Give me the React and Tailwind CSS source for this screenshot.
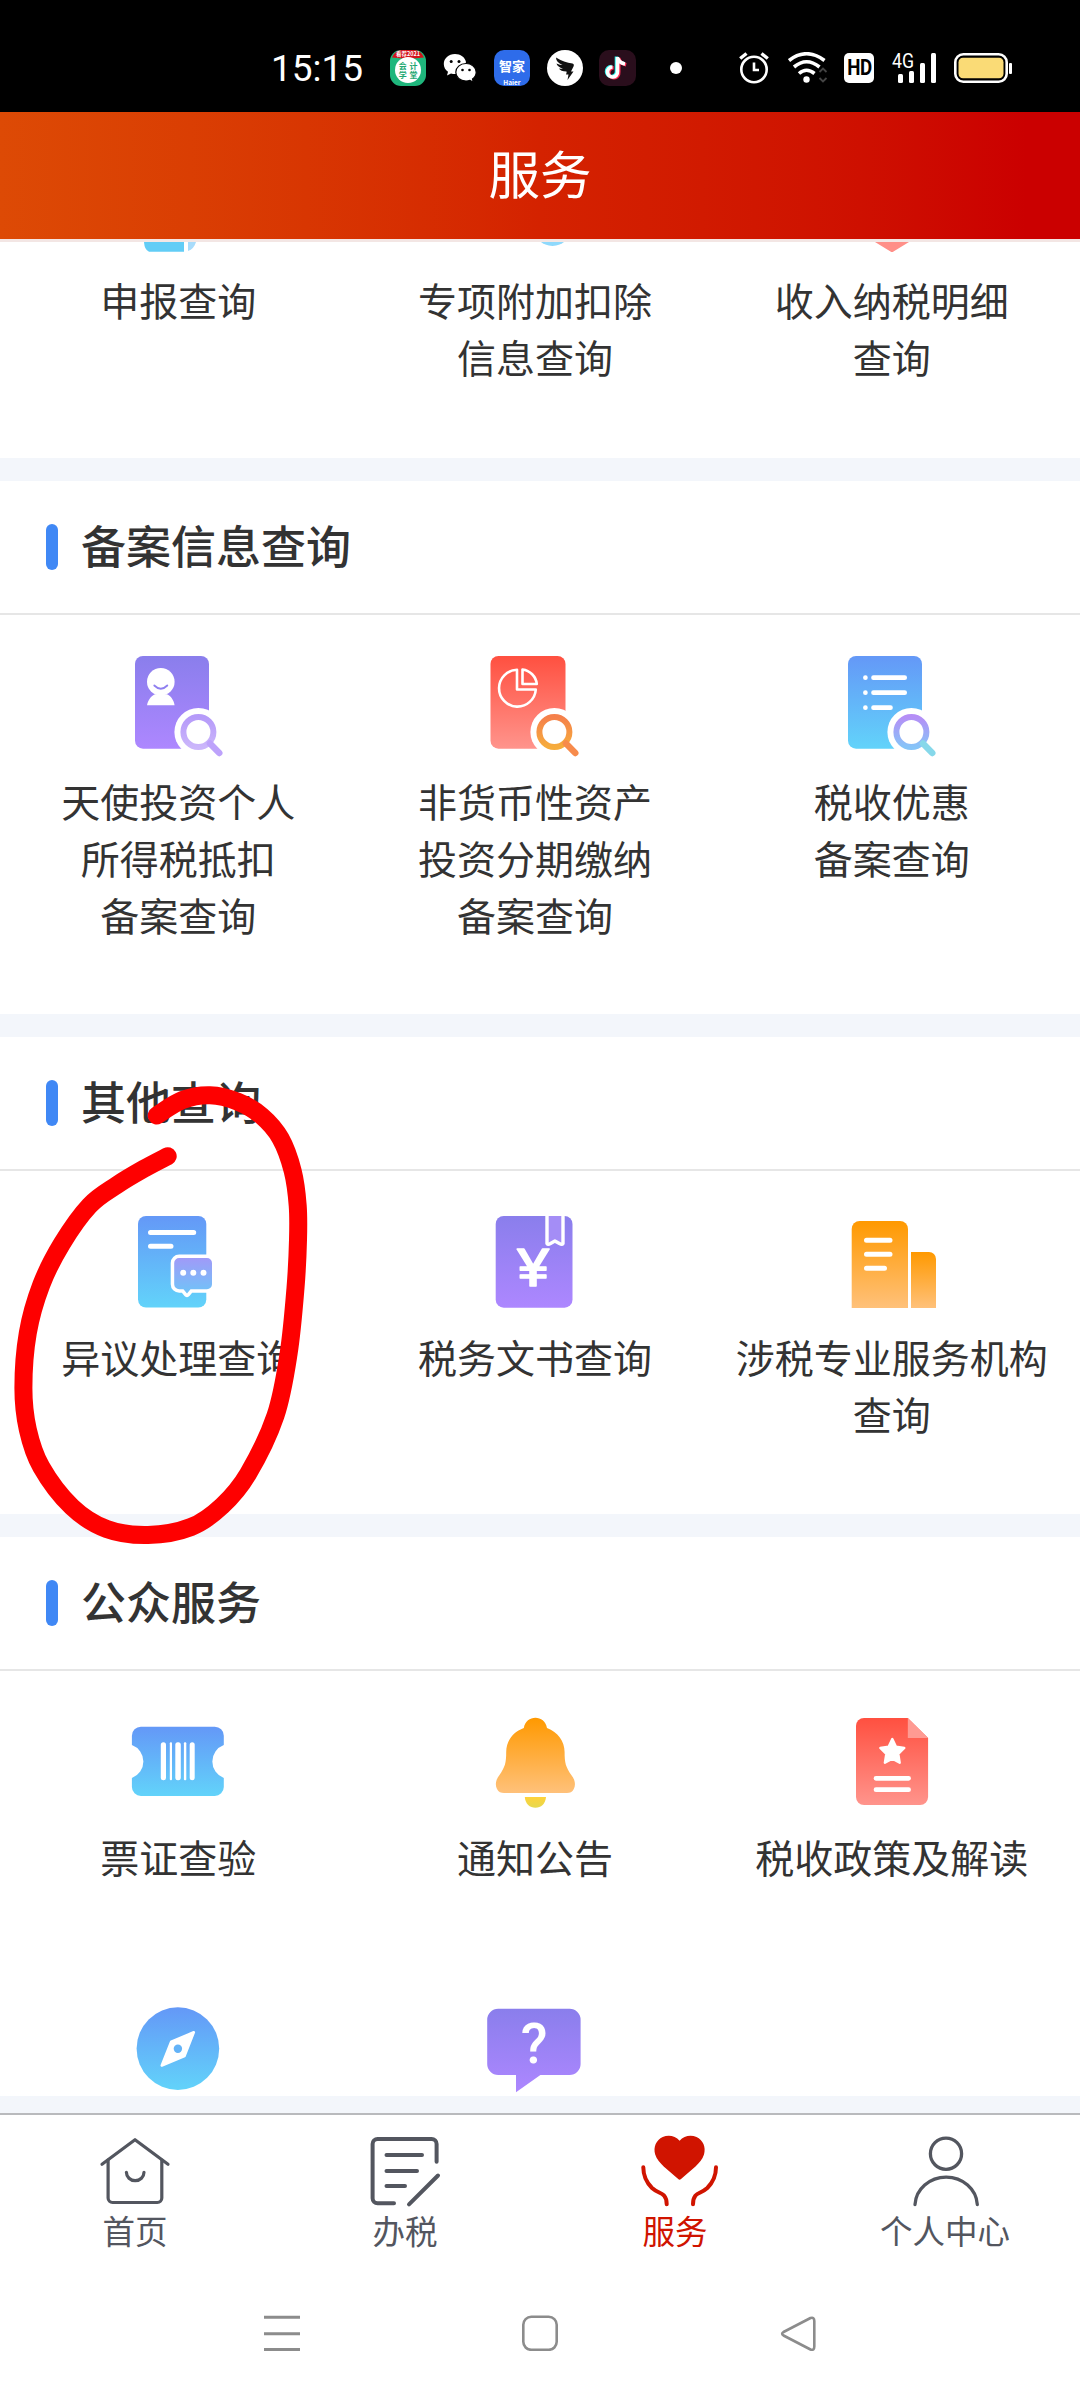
const gradients = [
  ['blue', '#6498f7', '#62d3fa'],
  ['purple', '#8a7eec', '#ad87ff'],
  ['red', '#ff5040', '#ff948c'],
  ['orange', '#ff9900', '#ffc17a'],
  ['lensPurple', '#b59af9', '#cbb6fb'],
  ['lensOrange', '#f5804b', '#f6ac3c'],
  ['lensBlue', '#b58ef6', '#86c4f8'],
  ['bubble', '#a09af8', '#6fc4f8'],
  ['clapper', '#ffd23a', '#e6d84e'],
]

function Gradients() {
  return (
    <svg className="absolute w-0 h-0">
      <defs>
        {gradients.map(([id, from, to]) => (
          <linearGradient key={id} id={id} x1="0" y1="0" x2="0" y2="1">
            <stop offset="0" stopColor={from} />
            <stop offset="1" stopColor={to} />
          </linearGradient>
        ))}
      </defs>
    </svg>
  )
}

function Icon({ children }) {
  return (
    <svg className="w-[101px] h-[110px]" viewBox="0 0 101 110" fill="none" strokeLinecap="round" strokeLinejoin="round">
      {children}
    </svg>
  )
}

function Lens({ fill, handle }) {
  return (
    <>
      <circle cx="70.4" cy="77" r="24" fill="#fff" />
      <circle cx="70.4" cy="77" r="15" stroke={`url(#${fill})`} strokeWidth="6" />
      <path d="M82 88.5L91.3 98" stroke={handle} strokeWidth="6.4" />
    </>
  )
}

const AngelIcon = () => (
  <Icon>
    <rect x="7" y="1" width="74" height="92.7" rx="8" fill="url(#purple)" />
    <circle cx="32.8" cy="26.7" r="13.8" fill="#fff" />
    <path d="M26.3 30.5Q32.8 37 39.3 30.5" stroke="#8f7ff0" strokeWidth="1.8" />
    <path d="M19 50.3C20 45 23 41 27 39.3H39C43 41 45.6 45 46.6 50.3Z" fill="#fff" />
    <Lens fill="lensPurple" handle="#bda2fb" />
  </Icon>
)

const AssetIcon = () => (
  <Icon>
    <rect x="6.5" y="1" width="75" height="92.7" rx="8" fill="url(#red)" />
    <path d="M33 14.8V34.5H51.8A18.4 18.4 0 1 1 33 14.8Z" stroke="#fff" strokeWidth="2.6" />
    <path d="M38.5 14.5V29H52.8A16.5 16.5 0 0 0 38.5 14.5Z" stroke="#fff" strokeWidth="2.6" />
    <Lens fill="lensOrange" handle="#f78b4c" />
  </Icon>
)

const BenefitIcon = () => (
  <Icon>
    <rect x="7" y="1" width="74" height="92.7" rx="8" fill="url(#blue)" />
    <g stroke="#fff" strokeWidth="4.7">
      <path d="M24.4 22.7h.01M24.4 37.7h.01M24.4 52.7h.01" />
      <path d="M32.5 22.7H63.7M32.5 37.7H63.7M32.5 52.7H49.5" />
    </g>
    <Lens fill="lensBlue" handle="#86d8ea" />
  </Icon>
)

const BUBBLE = 'M51.2 47H79a5 5 0 0 1 5 5V73.3a5 5 0 0 1-5 5H62.5L59 82.5L55.5 78.3H51.2a5 5 0 0 1-5-5V52a5 5 0 0 1 5-5Z'

const ObjectionIcon = () => (
  <Icon>
    <rect x="10" y="5" width="68.3" height="91.5" rx="8" fill="url(#blue)" />
    <path d="M22.5 21.5H65.7M22.5 35.3H43" stroke="#fff" strokeWidth="5" />
    <path d={BUBBLE} stroke="#fff" strokeWidth="7" />
    <path d={BUBBLE} fill="url(#bubble)" />
    <g fill="#fff">
      <circle cx="55.2" cy="61.8" r="3" />
      <circle cx="65.3" cy="61.8" r="3" />
      <circle cx="75.5" cy="61.8" r="3" />
    </g>
  </Icon>
)

const DocumentIcon = () => (
  <Icon>
    <rect x="11.7" y="5" width="76.8" height="91.7" rx="8" fill="url(#purple)" />
    <path d="M63 3V32.5Q64 34 66.5 32.5L70.9 30L75.4 32.5Q78 34 79 32.5V3" fill="#a48df6" stroke="#fff" strokeWidth="3.4" />
    <path d="M60 0H82V5H60Z" fill="#fff" />
    <g transform="translate(49.2 75) scale(1.2 1)">
      <text textAnchor="middle" fontSize="52" fontFamily="Roboto" fill="#fff" stroke="#fff" strokeWidth="1.4">¥</text>
    </g>
  </Icon>
)

const AgencyIcon = () => (
  <Icon>
    <path d="M10.7 97V18a8 8 0 0 1 8-8H59a8 8 0 0 1 8 8V97Z" fill="url(#orange)" />
    <path d="M70 97V41H88a7 7 0 0 1 7 7V97Z" fill="url(#orange)" />
    <path d="M25.5 29.3H49M25.5 43.3H49M25.5 57.3H43.5" stroke="#fff" strokeWidth="5" />
  </Icon>
)

const TicketIcon = () => (
  <Icon>
    <path d="M12.9 15.7H86.8a9 9 0 0 1 9 9V34A17.6 17.6 0 0 0 95.8 67V76a9 9 0 0 1-9 9H12.9a9 9 0 0 1-9-9V67A17.6 17.6 0 0 0 3.9 34V24.7a9 9 0 0 1 9-9Z" fill="url(#blue)" />
    <g fill="#fff">
      <rect x="32.8" y="31.3" width="5.2" height="38" rx="2.5" />
      <rect x="41.8" y="31.3" width="2.2" height="38" rx="1" />
      <rect x="47.3" y="31.3" width="5.5" height="38" rx="2.5" />
      <rect x="55.9" y="31.3" width="2.4" height="38" rx="1" />
      <rect x="61.7" y="31.3" width="5" height="38" rx="2.5" />
    </g>
  </Icon>
)

const BellIcon = () => (
  <Icon>
    <path d="M51.4 6.7C46 6.7 41 10 39.8 17C29 21 22.2 30 22.2 41C22.2 52 21 56 15.5 64C11.5 69 11 74 13 78C14.5 81 17 82 20 82H83C86 82 88.3 81 89.8 78C91.8 74 91.3 69 87.3 64C81.8 56 80.6 52 80.6 41C80.6 30 73.8 21 63 17C61.8 10 56.8 6.7 51.4 6.7Z" fill="url(#orange)" />
    <path d="M40.8 86H62C61.5 93 57 96.7 51.4 96.7C45.8 96.7 41.3 93 40.8 86Z" fill="url(#clapper)" />
  </Icon>
)

const PolicyIcon = () => (
  <Icon>
    <path d="M23 7H66.8L87.1 27V86a8 8 0 0 1-8 8H23a8 8 0 0 1-8-8V15a8 8 0 0 1 8-8Z" fill="url(#red)" />
    <path d="M66.8 7L87.1 27H66.8Z" fill="#ff9a92" />
    <path d="M51.3 28L55 35.7L63.3 37L57.3 43L58.7 51.7L51.3 47.7L43.9 51.7L45.3 43L39.3 37L47.6 35.7Z" fill="#fff" stroke="#fff" strokeWidth="2.4" />
    <path d="M35 67.3H67.6M35 78.7H67.6" stroke="#fff" strokeWidth="4.7" />
  </Icon>
)

const CompassIcon = () => (
  <Icon>
    <circle cx="49.9" cy="50.6" r="41.3" fill="url(#blue)" />
    <path d="M65.8 34.3L56.5 58L33.8 67.5L43.3 43.6Z" fill="#fff" stroke="#fff" strokeWidth="2.6" />
    <circle cx="49.9" cy="50.7" r="4.2" fill="#63b3f8" />
  </Icon>
)

const QuestionIcon = () => (
  <Icon>
    <path d="M14.2 10.7H85.6a11 11 0 0 1 11 11V66a11 11 0 0 1-11 11H56.4L32 94.3V77H14.2a11 11 0 0 1-11-11V21.7a11 11 0 0 1 11-11Z" fill="url(#purple)" />
    <text x="50" y="65" textAnchor="middle" fontSize="55" fontFamily="Roboto" fontWeight="500" fill="#fff">?</text>
  </Icon>
)

function Label({ lines }) {
  return (
    <p className="mt-[7px] mb-[2px] text-[39px] leading-[57px] text-[#333] text-center whitespace-nowrap">
      {lines.map((line) => (
        <span key={line} className="block">{line}</span>
      ))}
    </p>
  )
}

function Item({ icon: ItemIcon, lines }) {
  return (
    <div className="flex flex-col items-center">
      <ItemIcon />
      <Label lines={lines} />
    </div>
  )
}

function Section({ title, className, children }) {
  return (
    <section className={`bg-white shrink-0 ${className}`}>
      <div className="h-[134px] flex items-center pl-[46px] border-b-2 border-[#e6e6e6]">
        <span className="w-3 h-[46px] rounded-full bg-[#4088f5]" />
        <h2 className="ml-[23px] pb-[5px] text-[45px] leading-none font-medium text-[#333]">{title}</h2>
      </div>
      <div className="grid grid-cols-3 w-[1070px] pt-10 gap-y-[111px]">{children}</div>
    </section>
  )
}

function StatusBar() {
  return (
    <div className="h-[112px] shrink-0 bg-black text-white flex items-center pl-[271px] pt-6">
      <span className="w-[119px] text-[37px] leading-none font-normal font-[Roboto] whitespace-nowrap">15:15</span>
      <svg className="w-9 h-9 shrink-0 overflow-visible" viewBox="0 0 36 36">
        <rect width="36" height="36" rx="11" fill="#1fb67c" />
        <path d="M2 7.5Q5 0 12 0H24Q31 0 34 7.5Q18 9.5 2 7.5Z" fill="#d3131c" />
        <circle cx="18" cy="20" r="13" fill="#fff" />
        <text x="18" y="6" textAnchor="middle" fontSize="5.5" fontWeight="700" fill="#fff">看荐2021</text>
        <g fontSize="8" fontWeight="700" fill="#1fa873" textAnchor="middle">
          <text x="12.8" y="18.5">会</text>
          <text x="23.5" y="18.5">计</text>
          <text x="12.8" y="28">学</text>
          <text x="23.5" y="28">堂</text>
        </g>
      </svg>
      <svg className="ml-[17px] w-[35px] h-[30px] shrink-0" viewBox="0 0 35 30">
        <path d="M12 1C5.5 1 .8 5.5 .8 11C.8 14.2 2.4 17 5 18.8L4 22.5L8 20.4Q10 21 12 21Q18 21 21 16L23 9C22 4 17.5 1 12 1Z" fill="#fff" />
        <path d="M23 10.5C17 10.5 12.8 14.5 12.8 19.2C12.8 24 17 28 23 28Q25 28 27 27.4L30.3 29.3L29.5 26C31.8 24.3 33.2 22 33.2 19.2C33.2 14.5 28.8 10.5 23 10.5Z" fill="#fff" stroke="#000" strokeWidth="1.2" />
        <circle cx="8.2" cy="8.5" r="1.5" />
        <circle cx="16" cy="8.5" r="1.5" />
        <circle cx="19.5" cy="17" r="1.3" />
        <circle cx="26.5" cy="17" r="1.3" />
      </svg>
      <svg className="ml-4 w-9 h-9 shrink-0 overflow-visible" viewBox="0 0 36 36">
        <rect width="36" height="36" rx="10" fill="#2e6cea" />
        <text x="18" y="21" textAnchor="middle" fontSize="13" fontWeight="700" fill="#fff">智家</text>
        <text x="18" y="34.5" textAnchor="middle" fontSize="6.5" fontWeight="700" fill="#fff">Haier</text>
      </svg>
      <svg className="ml-[17px] w-9 h-9 shrink-0" viewBox="0 0 36 36">
        <circle cx="18" cy="18" r="18" fill="#fff" />
        <path d="M9 7.5Q17 12.5 25.5 13.5Q27.5 14 26.5 16.5L24 21.5H26.5L20.5 30L21.5 24.5H19Q20 22 19.5 21.5Q13.500 21.5 12 18.5Q15 19 16 18.8Q10.500 17 9.5 13.5Q13 15 15.5 15Q9 12 9 7.5Z" fill="#111" />
      </svg>
      <svg className="ml-4 w-[37px] h-9 shrink-0" viewBox="0 0 37 36">
        <rect width="37" height="36" rx="10" fill="#2a0e1c" />
        <g fill="none" strokeWidth="3.6">
          <path d="M18.5 7V21.5A5 5 0 1 1 13.5 17M18.5 7.5Q20 13 26 14" stroke="#25f4ee" transform="translate(-1 -0.5)" />
          <path d="M18.5 7V21.5A5 5 0 1 1 13.5 17M18.5 7.5Q20 13 26 14" stroke="#fe2c55" transform="translate(1.2 0.8)" />
          <path d="M18.5 7V21.5A5 5 0 1 1 13.5 17M18.5 7.5Q20 13 26 14" stroke="#fff" />
        </g>
      </svg>
      <span className="ml-[34px] w-3 h-3 rounded-full bg-white" />
      <svg className="ml-[57px] w-[31px] h-8 shrink-0" viewBox="0 0 31 32" fill="none" stroke="#fff" strokeWidth="2.6">
        <circle cx="15" cy="17.5" r="12.7" />
        <path d="M15 10.5V18H20" />
        <path d="M1.2 6.5L7.5 1.5M22.5 1.5L28.8 6.5" strokeWidth="3.4" />
      </svg>
      <svg className="ml-[18px] w-10 h-8 shrink-0" viewBox="0 0 40 32" fill="none" stroke="#fff" strokeWidth="3.6">
        <path d="M1 8.5Q18.5 -5 36.5 8.5" />
        <path d="M6 15Q18.5 4.5 31.5 15" />
        <path d="M11 21.5Q18.5 15 26.5 21.5" />
        <circle cx="18.5" cy="27.5" r="3.2" fill="#fff" stroke="none" />
        <path d="M31.5 20L35 16.5L38.5 20M31.5 26L35 29.5L38.5 26" stroke="#444" strokeWidth="1.8" />
      </svg>
      <span className="ml-4 w-[30px] h-[30px] rounded-[5px] bg-white text-black flex items-center justify-center text-[22px] leading-none font-bold font-[Roboto]">
        <span className="inline-block scale-x-[0.85] tracking-tight">HD</span>
      </span>
      <svg className="ml-[18px] w-[46px] h-[30px] shrink-0 overflow-visible" viewBox="0 0 46 30" fill="#fff">
        <text x="0" y="14.5" fontSize="19.5" fontFamily="Roboto" textLength="22" lengthAdjust="spacingAndGlyphs">4G</text>
        <rect x="6" y="21" width="5" height="9" rx="1.5" />
        <rect x="17" y="18" width="5" height="12" rx="1.5" />
        <rect x="28" y="10" width="5" height="20" rx="1.5" />
        <rect x="39" y="0" width="5" height="30" rx="1.5" />
      </svg>
      <svg className="ml-4 w-[59px] h-[30px] shrink-0" viewBox="0 0 59 30">
        <rect x="1.3" y="1.3" width="51.4" height="27.4" rx="8" fill="none" stroke="#fff" strokeWidth="2.6" />
        <rect x="4.5" y="4.8" width="45" height="20.4" rx="4.5" fill="#fadb76" />
        <rect x="55" y="10" width="3" height="11" rx="1" fill="#fff" />
      </svg>
    </div>
  )
}

const PARTIAL_ICONS = [
  <g key="a">
    <path d="M16 0H56V9.7H21Q16.5 8 16 0Z" fill="#62cdf6" />
    <path d="M60 0H68Q66 7 60 9Z" fill="#a8dcfb" />
  </g>,
  <circle key="b" cx="68.5" cy="-14.5" r="18.5" fill="#8fd9fc" />,
  <path key="c" d="M34 0H68L52.5 9.5Q51 10.5 49.5 9.5Z" fill="#ff8f88" />,
]

const PARTIAL_LABELS = [['申报查询'], ['专项附加扣除', '信息查询'], ['收入纳税明细', '查询']]

const TABS = [
  {
    label: '首页',
    icon: (
      <g strokeWidth="3.2">
        <path d="M7 32.3L40 7.7L73 32.3" />
        <path d="M13.1 28V66a4.5 4.5 0 0 0 4.5 4.5H62.3a4.5 4.5 0 0 0 4.5-4.5V28" />
        <path d="M31.4 40.3A8.8 8.4 0 0 0 49 40.3" />
      </g>
    ),
  },
  {
    label: '办税',
    icon: (
      <g strokeWidth="4">
        <path d="M71.6 29.7V12a5 5 0 0 0-5-5H12.6a5 5 0 0 0-5 5V66.3a5 5 0 0 0 5 5H29" />
        <path d="M21.5 23H57M21.5 39H52M21.5 54H40M73 43.5L44 72.3" />
      </g>
    ),
  },
  {
    label: '服务',
    active: true,
    icon: (
      <g strokeWidth="4">
        <path d="M44.6 8.7C49 3.5 56 2.5 61.5 5C68 8 71.2 15 69 22.5C67.5 27.5 64 31 60.5 34.5L46 47Q44.6 48.3 43.2 47L28.7 34.5C25.2 31 21.7 27.5 20.2 22.5C18 15 21.2 8 27.7 5C33.2 2.5 40.2 3.5 44.6 8.7Z" fill="currentColor" stroke="none" />
        <path d="M8.3 35.3C8.3 44 11 50 17 56C22 60.5 26 60.5 29 63.5Q31.7 66.5 31.7 72.3" />
        <path d="M81 35.3C81 44 78.3 50 72.3 56C67.3 60.5 63.3 60.5 60.5 63.5Q58 66.5 58 72.3" />
      </g>
    ),
  },
  {
    label: '个人中心',
    icon: (
      <g strokeWidth="3.3">
        <circle cx="41" cy="21.7" r="15.6" />
        <path d="M10 72.5A31.2 29 0 0 1 72.3 72.5" />
      </g>
    ),
  },
]

const RING = [
  [156.7, 1115.4], [182.5, 1100], [210, 1095.2], [237.6, 1101.6], [261.7, 1116], [280.6, 1138.5],
  [292.7, 1171], [297.7, 1205.6], [298, 1240], [295.5, 1288], [288.6, 1353.7], [275.5, 1415.7],
  [248, 1474], [222, 1506], [191, 1527], [148, 1535], [106.7, 1529], [72, 1507],
  [41.3, 1467], [27.8, 1429.4], [23.4, 1388], [27.8, 1333], [41.3, 1284.8], [62, 1243.5],
  [89.5, 1205.6], [117, 1185], [144.6, 1168.4], [167.7, 1156.2],
]

// smooth curve through all the points (Catmull-Rom to bezier)
function smooth(points) {
  let d = `M${points[0].join(' ')}`
  for (let i = 0; i < points.length - 1; i++) {
    const a = points[i - 1] || points[i]
    const b = points[i]
    const c = points[i + 1]
    const e = points[i + 2] || c
    d += `C${b[0] + (c[0] - a[0]) / 6} ${b[1] + (c[1] - a[1]) / 6} ${c[0] - (e[0] - b[0]) / 6} ${c[1] - (e[1] - b[1]) / 6} ${c[0]} ${c[1]}`
  }
  return d
}

export default function App() {
  return (
    <div className="relative w-[1080px] h-[2400px] flex flex-col overflow-hidden bg-white font-['Noto_Sans_CJK_SC',sans-serif]">
      <Gradients />
      <StatusBar />
      <header className="h-[130px] shrink-0 flex items-center justify-center bg-linear-to-r from-[#dd4a05] via-[#d42200] to-[#cb0000] to-95% border-b-[3px] border-[#f3e6e4] bg-clip-padding">
        <h1 className="pb-2 text-[51.5px] leading-none text-white">服务</h1>
      </header>

      <main className="h-[1871px] shrink-0 overflow-hidden bg-[#f3f6fb] flex flex-col gap-[23px]">
        <section className="h-[216px] shrink-0 bg-white">
          <div className="grid grid-cols-3 w-[1070px]">
            {PARTIAL_LABELS.map((lines, i) => (
              <div key={i} className="flex flex-col items-center">
                <svg className="w-[101px] h-[22px]" viewBox="0 0 101 22">{PARTIAL_ICONS[i]}</svg>
                <Label lines={lines} />
              </div>
            ))}
          </div>
        </section>

        <Section title="备案信息查询" className="h-[533px]">
          <Item icon={AngelIcon} lines={['天使投资个人', '所得税抵扣', '备案查询']} />
          <Item icon={AssetIcon} lines={['非货币性资产', '投资分期缴纳', '备案查询']} />
          <Item icon={BenefitIcon} lines={['税收优惠', '备案查询']} />
        </Section>

        <Section title="其他查询" className="h-[477px]">
          <Item icon={ObjectionIcon} lines={['异议处理查询']} />
          <Item icon={DocumentIcon} lines={['税务文书查询']} />
          <Item icon={AgencyIcon} lines={['涉税专业服务机构', '查询']} />
        </Section>

        <Section title="公众服务" className="h-[559px] overflow-hidden">
          <Item icon={TicketIcon} lines={['票证查验']} />
          <Item icon={BellIcon} lines={['通知公告']} />
          <Item icon={PolicyIcon} lines={['税收政策及解读']} />
          <Item icon={CompassIcon} lines={[]} />
          <Item icon={QuestionIcon} lines={[]} />
        </Section>
      </main>

      <nav className="h-[157px] shrink-0 grid grid-cols-4 pt-[17px] border-t-2 border-[#b9babd] bg-white">
        {TABS.map((tab) => (
          <div key={tab.label} className={`flex flex-col items-center ${tab.active ? 'text-[#d01400]' : 'text-[#53565f]'}`}>
            <svg className="w-[90px] h-[76px]" viewBox="-5 0 90 76" fill="none" stroke="currentColor" strokeLinecap="round" strokeLinejoin="round">
              {tab.icon}
            </svg>
            <span className="text-[32.5px] leading-[43px]">{tab.label}</span>
          </div>
        ))}
      </nav>

      <div className="flex-1 flex items-start justify-between pt-[45px] px-[264px] text-[#8c8c8c]">
        <svg className="w-9 h-9" viewBox="0 0 36 36" stroke="currentColor" strokeWidth="3">
          <path d="M0 2.3H36M0 18.7H36M0 34.5H36" />
        </svg>
        <svg className="w-9 h-9" viewBox="0 0 36 36" fill="none" stroke="currentColor" strokeWidth="2.6">
          <rect x="1.3" y="1.8" width="33.4" height="33" rx="8" />
        </svg>
        <svg className="w-9 h-9" viewBox="0 0 36 36" fill="none" stroke="currentColor" strokeWidth="2.6" strokeLinejoin="round">
          <path d="M3.5 17L30.5 3Q34.3 1.8 34.3 6V31.5Q34.3 35.8 30.5 34.5L3.5 20.5Q.8 18.7 3.5 17Z" />
        </svg>
      </div>

      {/* hand-drawn marker ring around the first entry */}
      <svg className="absolute left-0 top-[1060px] w-[330px] h-[500px]" viewBox="0 1060 330 500" fill="none" stroke="#fe0000" strokeWidth="18" strokeLinecap="round" strokeLinejoin="round">
        <path d={smooth(RING)} />
      </svg>
    </div>
  )
}
